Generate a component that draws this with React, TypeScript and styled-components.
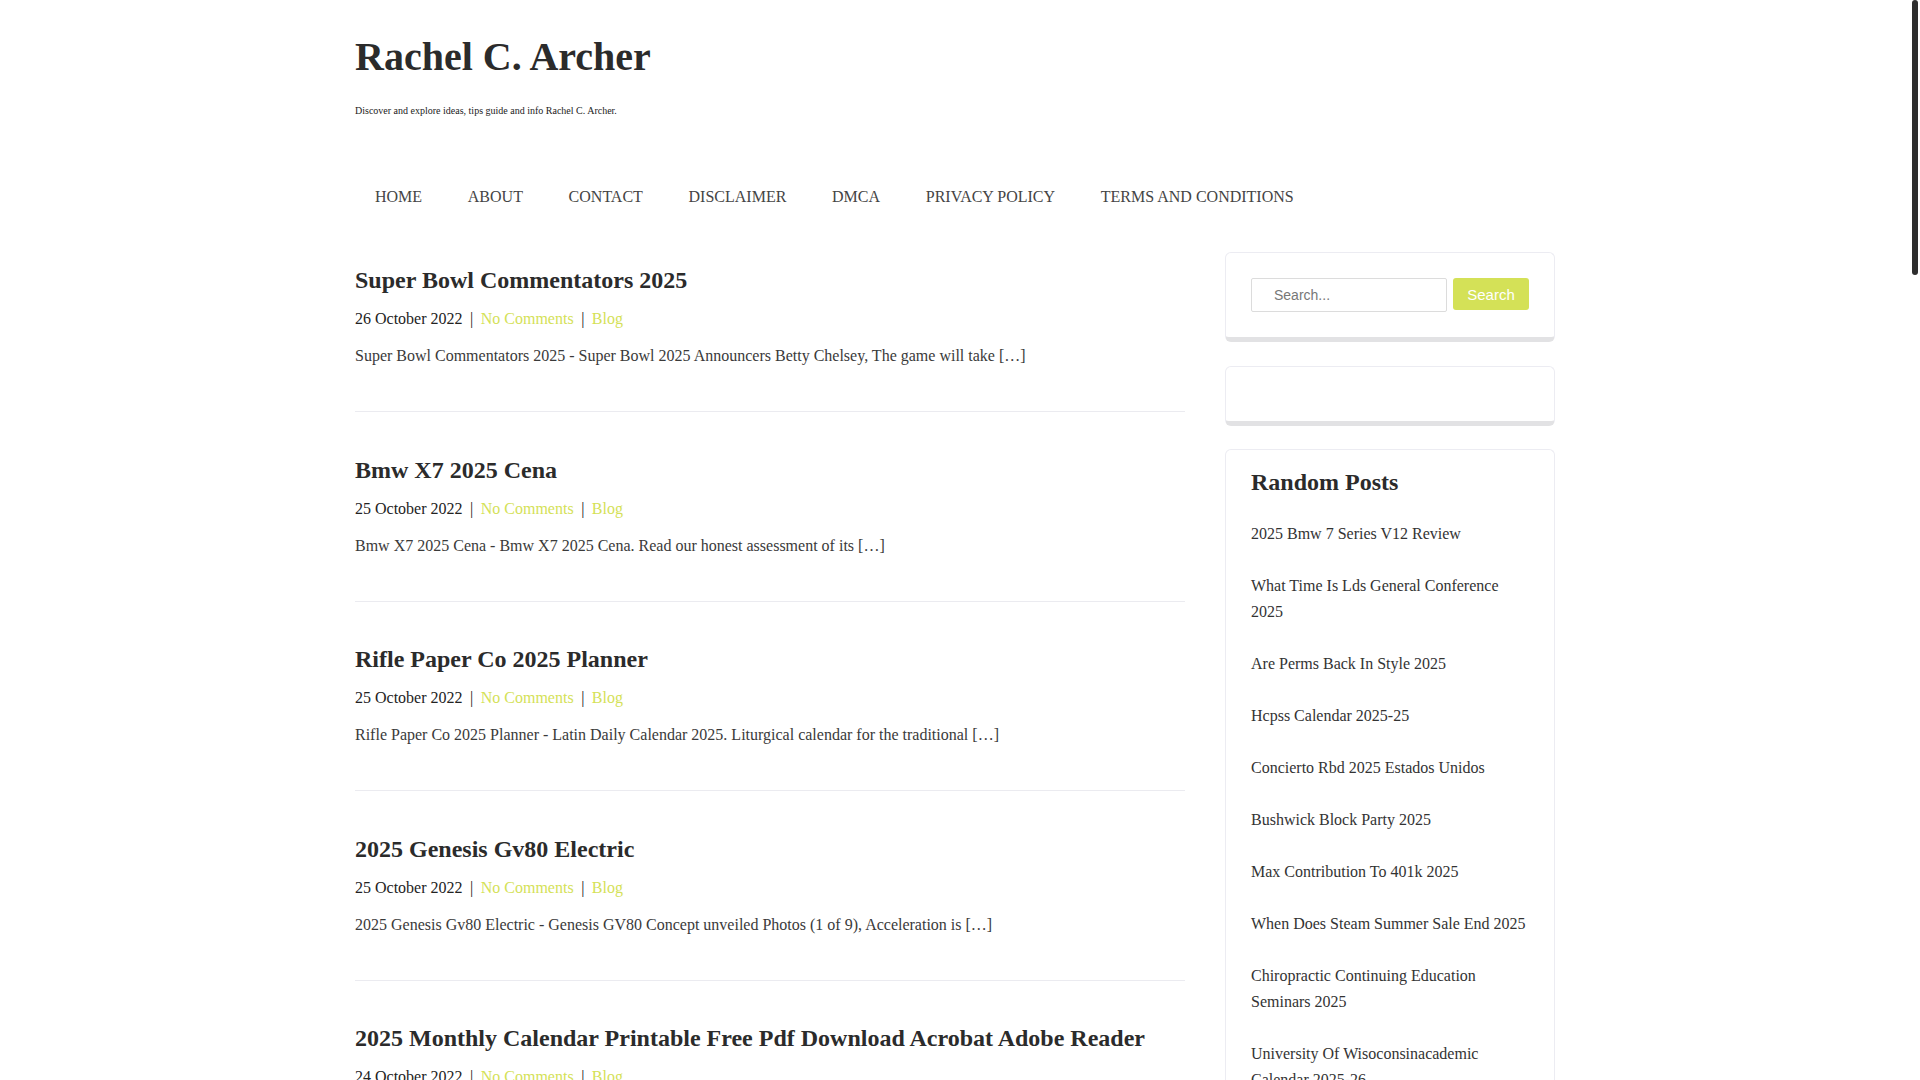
import React from "react";
import styled, { createGlobalStyle } from "styled-components";

const GlobalStyle = createGlobalStyle`
  html, body {
    margin: 0;
    padding: 0;
    background: #fff;
  }
  body {
    font-family: "Liberation Serif", "Times New Roman", serif;
    color: #2b2b2b;
  }
  ::-webkit-scrollbar {
    width: 10px;
  }
  ::-webkit-scrollbar-track {
    background: #fff;
  }
  ::-webkit-scrollbar-thumb {
    background: #2e2e2e;
    border-radius: 5px;
    border: 2px solid #fff;
  }
`;

const LIME = "#d4e157";

// leaves room for the 10px scrollbar seen on the right of the page
const StPage = styled.div`
  padding-right: 10px;
`;

const StScrollThumb = styled.div`
  position: fixed;
  top: 0;
  right: 2px;
  width: 6px;
  height: 275px;
  border-radius: 3px;
  background: #2e2e2e;
`;

const StContainer = styled.div`
  width: 1200px;
  margin: 0 auto;
`;

const StHeader = styled.header`
  padding-top: 33px;
`;

const StSiteTitle = styled.h1`
  margin: 0;
  font-size: 40px;
  line-height: 48px;
  font-weight: 700;
  color: #2b2b2b;
`;

const StTagline = styled.p`
  margin: 22px 0 0;
  font-size: 10px;
  line-height: 16px;
  color: #222;
`;

const StNav = styled.nav`
  margin-top: 60px;
  height: 36px;
  display: flex;
  align-items: center;
  gap: 45.7px;
  padding-left: 20px;
`;

const StNavLink = styled.a`
  font-size: 16px;
  line-height: 36px;
  text-transform: uppercase;
  color: #444;
  text-decoration: none;
`;

const StRow = styled.div`
  margin-top: 38px;
  display: grid;
  grid-template-columns: 830px 330px;
  column-gap: 40px;
  align-items: start;
  padding-bottom: 60px;
`;

const StMain = styled.main`
  display: flex;
  flex-direction: column;
`;

const StPost = styled.article`
  padding: 12px 0 43px;
  border-bottom: 1px solid #ebebf0;
  margin-bottom: 30.5px;
`;

const StPostTitle = styled.h2`
  margin: 0;
  font-size: 24px;
  line-height: 30px;
  font-weight: 700;
  color: #2b2b2b;
`;

const StMeta = styled.div`
  margin-top: 12px;
  font-size: 16px;
  line-height: 24px;
  color: #222;
  display: flex;
  align-items: center;
`;

const StMetaLink = styled.a`
  color: ${LIME};
  text-decoration: none;
`;

const StSep = styled.span`
  padding: 0 7.5px;
`;

const StExcerpt = styled.p`
  margin: 13px 0 0;
  font-size: 16px;
  line-height: 24px;
  color: #3a3a3a;
`;

const StSidebar = styled.aside`
  margin-top: -1px;
  display: flex;
  flex-direction: column;
  gap: 23.5px;
`;

const StWidget = styled.section<{ $empty?: boolean }>`
  border: 1px solid #ececf2;
  border-bottom: 5px solid #e2e2e4;
  border-radius: 6px;
  padding: ${({ $empty }) => ($empty ? "27px 25px" : "25px")};
`;

const StSearchForm = styled.form`
  display: flex;
  align-items: flex-start;
  gap: 6px;
`;

const StSearchInput = styled.input`
  width: 196px;
  height: 34px;
  box-sizing: border-box;
  border: 1px solid #dcdcdc;
  border-radius: 2px;
  padding: 0 10px 0 22px;
  font-family: "Liberation Sans", Arial, sans-serif;
  font-size: 14px;
  color: #555;
  outline: none;
  &::placeholder {
    color: #777;
  }
`;

const StSearchButton = styled.button`
  width: 77px;
  height: 32px;
  border: none;
  border-radius: 3px;
  background: ${LIME};
  color: #fff;
  font-family: "Liberation Sans", Arial, sans-serif;
  font-size: 15px;
  cursor: pointer;
`;

const StWidgetTitle = styled.h3`
  margin: -8px 0 11px;
  font-size: 24px;
  line-height: 30px;
  font-weight: 700;
  color: #2b2b2b;
`;

const StList = styled.ul`
  list-style: none;
  margin: 0;
  padding: 0;
`;

const StListItem = styled.li`
  padding: 13px 0;
  font-size: 16px;
  line-height: 26px;
`;

const StListLink = styled.a`
  color: #333;
  text-decoration: none;
`;

const StFooter = styled.footer`
  border-top: 1px solid #ebebf0;
  padding: 30px 0 40px;
  font-size: 14px;
  color: #666;
  text-align: center;
`;

const navItems = [
  "Home",
  "About",
  "Contact",
  "Disclaimer",
  "DMCA",
  "Privacy Policy",
  "Terms and Conditions",
];

interface IPost {
  title: string;
  date: string;
  excerpt: string;
}

const posts: IPost[] = [
  {
    title: "Super Bowl Commentators 2025",
    date: "26 October 2022",
    excerpt:
      "Super Bowl Commentators 2025 - Super Bowl 2025 Announcers Betty Chelsey, The game will take […]",
  },
  {
    title: "Bmw X7 2025 Cena",
    date: "25 October 2022",
    excerpt:
      "Bmw X7 2025 Cena - Bmw X7 2025 Cena. Read our honest assessment of its […]",
  },
  {
    title: "Rifle Paper Co 2025 Planner",
    date: "25 October 2022",
    excerpt:
      "Rifle Paper Co 2025 Planner - Latin Daily Calendar 2025. Liturgical calendar for the traditional […]",
  },
  {
    title: "2025 Genesis Gv80 Electric",
    date: "25 October 2022",
    excerpt:
      "2025 Genesis Gv80 Electric - Genesis GV80 Concept unveiled Photos (1 of 9), Acceleration is […]",
  },
  {
    title:
      "2025 Monthly Calendar Printable Free Pdf Download Acrobat Adobe Reader",
    date: "24 October 2022",
    excerpt:
      "2025 Monthly Calendar Printable Free Pdf Download Acrobat Adobe Reader - Free printable monthly calendar 2025 in PDF format. […]",
  },
  {
    title: "Nfl Draft 2025 Order",
    date: "24 October 2022",
    excerpt: "Nfl Draft 2025 Order - The full first round order for the 2025 draft, with every pick […]",
  },
  {
    title: "Honda Pilot 2025 Redesign",
    date: "24 October 2022",
    excerpt: "Honda Pilot 2025 Redesign - The next generation Pilot gets a fresh look and a new […]",
  },
  {
    title: "Easter Sunday 2025 Date",
    date: "23 October 2022",
    excerpt: "Easter Sunday 2025 Date - Easter Sunday falls on April 20 in 2025, Western churches […]",
  },
  {
    title: "Toyota Tacoma 2025 Hybrid",
    date: "23 October 2022",
    excerpt: "Toyota Tacoma 2025 Hybrid - The hybrid Tacoma promises better mileage and more […]",
  },
  {
    title: "Academic Calendar 2025-26 Template",
    date: "23 October 2022",
    excerpt: "Academic Calendar 2025-26 Template - Editable school year calendar template for the […]",
  },
  {
    title: "Chinese New Year 2025 Animal",
    date: "22 October 2022",
    excerpt: "Chinese New Year 2025 Animal - 2025 is the Year of the Snake, beginning on January […]",
  },
  {
    title: "World Cup 2025 Schedule",
    date: "22 October 2022",
    excerpt: "World Cup 2025 Schedule - All match dates, venues and kick off times for the […]",
  },
  {
    title: "Ford Bronco 2025 Colors",
    date: "22 October 2022",
    excerpt: "Ford Bronco 2025 Colors - Every exterior paint option available on the 2025 Bronco […]",
  },
  {
    title: "Federal Holidays 2025 Calendar",
    date: "21 October 2022",
    excerpt: "Federal Holidays 2025 Calendar - List of federal holidays observed in 2025, New Year's […]",
  },
  {
    title: "Coachella 2025 Lineup",
    date: "21 October 2022",
    excerpt: "Coachella 2025 Lineup - Headliners and the full list of artists for both weekends […]",
  },
  {
    title: "Kia Telluride 2025 Price",
    date: "21 October 2022",
    excerpt: "Kia Telluride 2025 Price - Pricing for each trim of the 2025 Telluride starts at […]",
  },
  {
    title: "Pantone Color Of The Year 2025",
    date: "20 October 2022",
    excerpt: "Pantone Color Of The Year 2025 - The shade chosen to set the tone for design in […]",
  },
  {
    title: "Tax Brackets 2025 Married Filing Jointly",
    date: "20 October 2022",
    excerpt: "Tax Brackets 2025 Married Filing Jointly - Income ranges and rates for couples filing […]",
  },
  {
    title: "Ramadan 2025 Start Date",
    date: "20 October 2022",
    excerpt: "Ramadan 2025 Start Date - The holy month is expected to begin on the evening of […]",
  },
  {
    title: "Mardi Gras 2025 Parade Schedule",
    date: "19 October 2022",
    excerpt: "Mardi Gras 2025 Parade Schedule - Dates and routes of every parade rolling in New […]",
  },
];

const randomPosts = [
  "2025 Bmw 7 Series V12 Review",
  "What Time Is Lds General Conference 2025",
  "Are Perms Back In Style 2025",
  "Hcpss Calendar 2025-25",
  "Concierto Rbd 2025 Estados Unidos",
  "Bushwick Block Party 2025",
  "Max Contribution To 401k 2025",
  "When Does Steam Summer Sale End 2025",
  "Chiropractic Continuing Education Seminars 2025",
  "University Of Wisoconsinacademic Calendar 2025-26",
  "Ucf Spring 2025 Calendar",
  "Nba All Star Game 2025 Tickets",
];

const Post = ({ title, date, excerpt }: IPost) => (
  <StPost>
    <StPostTitle>{title}</StPostTitle>
    <StMeta>
      <span>{date}</span>
      <StSep>|</StSep>
      <StMetaLink href="#">No Comments</StMetaLink>
      <StSep>|</StSep>
      <StMetaLink href="#">Blog</StMetaLink>
    </StMeta>
    <StExcerpt>{excerpt}</StExcerpt>
  </StPost>
);

const App = () => {
  return (
    <StPage>
      <GlobalStyle />
      <StScrollThumb />
      <StContainer>
        <StHeader>
          <StSiteTitle>Rachel C. Archer</StSiteTitle>
          <StTagline>
            Discover and explore ideas, tips guide and info Rachel C. Archer.
          </StTagline>
        </StHeader>
        <StNav>
          {navItems.map((item) => (
            <StNavLink key={item} href="#">
              {item}
            </StNavLink>
          ))}
        </StNav>
        <StRow>
          <StMain>
            {posts.map((post) => (
              <Post key={post.title} {...post} />
            ))}
          </StMain>
          <StSidebar>
            <StWidget>
              <StSearchForm onSubmit={(e) => e.preventDefault()}>
                <StSearchInput type="text" placeholder="Search..." />
                <StSearchButton type="submit">Search</StSearchButton>
              </StSearchForm>
            </StWidget>
            <StWidget $empty />
            <StWidget>
              <StWidgetTitle>Random Posts</StWidgetTitle>
              <StList>
                {randomPosts.map((item) => (
                  <StListItem key={item}>
                    <StListLink href="#">{item}</StListLink>
                  </StListItem>
                ))}
              </StList>
            </StWidget>
          </StSidebar>
        </StRow>
        <StFooter>Copyright © 2022 Rachel C. Archer</StFooter>
      </StContainer>
    </StPage>
  );
};

export default App;
